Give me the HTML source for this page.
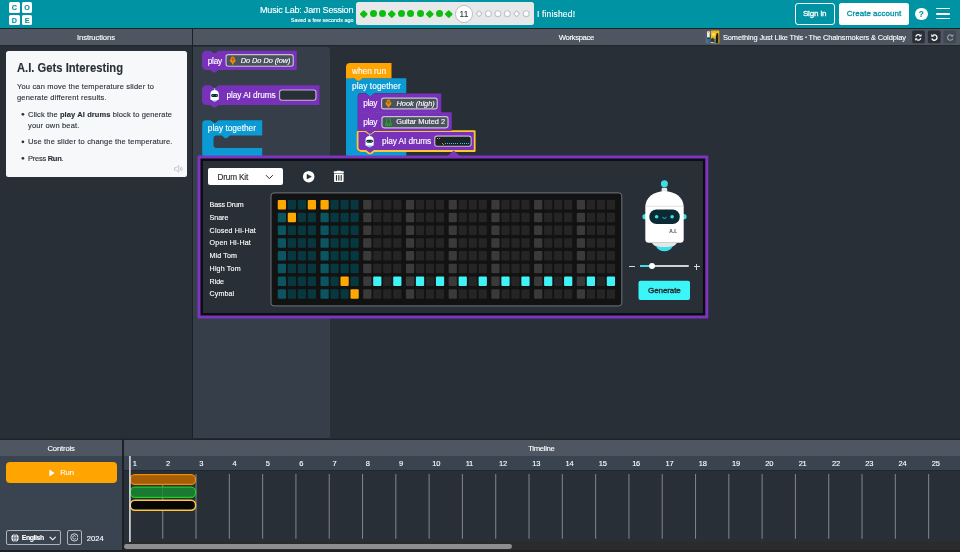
<!DOCTYPE html>
<html lang="en"><head><meta charset="utf-8"><title>Music Lab: Jam Session</title>
<style>
*{box-sizing:border-box;margin:0;padding:0}
html,body{width:960px;height:552px;overflow:hidden;background:#292f36;font-family:"Liberation Sans",sans-serif}
body{position:relative;will-change:transform}
.a{position:absolute}
.t{position:absolute;white-space:nowrap;line-height:1;transform-origin:0 50%;-webkit-text-stroke:0.12px currentColor}
b{font-weight:700}
</style></head>
<body>
<header class="a" style="left:0;top:0;width:960px;height:28px;background:#0093a4">
<div class="a" style="left:9.00px;top:2.00px;width:10.90px;height:10.70px;background:#fff;border-radius:1.5px"></div>
<span class="t" id="t0" style="left:11.85px;top:3.96px;font-size:7.20px;color:#0093a4;font-weight:700;">C</span>
<div class="a" style="left:21.60px;top:2.00px;width:10.90px;height:10.70px;background:#fff;border-radius:1.5px"></div>
<span class="t" id="t1" style="left:24.25px;top:3.96px;font-size:7.20px;color:#0093a4;font-weight:700;">O</span>
<div class="a" style="left:9.00px;top:14.70px;width:10.90px;height:10.70px;background:#fff;border-radius:1.5px"></div>
<span class="t" id="t2" style="left:11.85px;top:16.65px;font-size:7.20px;color:#0093a4;font-weight:700;">D</span>
<div class="a" style="left:21.60px;top:14.70px;width:10.90px;height:10.70px;background:#fff;border-radius:1.5px"></div>
<span class="t" id="t3" style="left:24.65px;top:16.65px;font-size:7.20px;color:#0093a4;font-weight:700;">E</span>
<span class="t" id="t4" style="left:260.00px;top:6.26px;font-size:9.10px;color:#fff;letter-spacing:-0.241px;">Music Lab: Jam Session</span>
<span class="t" id="t5" style="left:290.75px;top:17.50px;font-size:5.40px;color:#fff;letter-spacing:0.046px;">Saved a few seconds ago</span>
<div class="a" style="left:356px;top:2.3px;width:177.5px;height:22.6px;background:#e7e8ea;border-radius:2.5px"></div>
<div class="a" style="left:361.00px;top:11.05px;width:5.50px;height:5.50px;background:#0ebe0e;transform:rotate(45deg);border-radius:1.1px"></div>
<div class="a" style="left:369.60px;top:10.15px;width:7.20px;height:7.20px;background:#0ebe0e;border-radius:50%"></div>
<div class="a" style="left:379.00px;top:10.15px;width:7.20px;height:7.20px;background:#0ebe0e;border-radius:50%"></div>
<div class="a" style="left:389.25px;top:11.05px;width:5.50px;height:5.50px;background:#0ebe0e;transform:rotate(45deg);border-radius:1.1px"></div>
<div class="a" style="left:397.80px;top:10.15px;width:7.20px;height:7.20px;background:#0ebe0e;border-radius:50%"></div>
<div class="a" style="left:407.20px;top:10.15px;width:7.20px;height:7.20px;background:#0ebe0e;border-radius:50%"></div>
<div class="a" style="left:416.60px;top:10.15px;width:7.20px;height:7.20px;background:#0ebe0e;border-radius:50%"></div>
<div class="a" style="left:426.95px;top:11.05px;width:5.50px;height:5.50px;background:#0ebe0e;transform:rotate(45deg);border-radius:1.1px"></div>
<div class="a" style="left:435.50px;top:10.15px;width:7.20px;height:7.20px;background:#0ebe0e;border-radius:50%"></div>
<div class="a" style="left:445.75px;top:11.05px;width:5.50px;height:5.50px;background:#0ebe0e;transform:rotate(45deg);border-radius:1.1px"></div>
<div class="a" style="left:454.95px;top:4.95px;width:17.60px;height:17.60px;background:#fff;border-radius:50%;border:0.9px solid #b9bdc2"></div>
<span class="t" id="t6" style="left:459.44px;top:9.60px;font-size:8.30px;color:#33383e;letter-spacing:0.25px;">11</span>
<svg class="a" style="left:470px;top:4px" width="64" height="20" viewBox="470 4 64 20" fill="#fefefe" stroke="#c2c6cb" stroke-width="1.15"><rect x="476.85" y="11.55" width="4.3" height="4.3" rx="0.6" transform="rotate(45 479.00 13.7)"/><circle cx="488.40" cy="13.7" r="2.95"/><circle cx="497.90" cy="13.7" r="2.95"/><circle cx="507.30" cy="13.7" r="2.95"/><rect x="514.45" y="11.55" width="4.3" height="4.3" rx="0.6" transform="rotate(45 516.60 13.7)"/><circle cx="526.20" cy="13.7" r="2.95"/></svg>
<span class="t" id="t7" style="left:537.00px;top:9.76px;font-size:8.50px;color:#fff;letter-spacing:0.161px;">I finished!</span>
<div class="a" style="left:795.40px;top:3.00px;width:39.40px;height:21.50px;background:transparent;border:1.2px solid #fff;border-radius:3px"></div>
<span class="t" id="t8" style="left:802.90px;top:10.11px;font-size:8.00px;color:#fff;letter-spacing:-0.145px;-webkit-text-stroke:0.3px currentColor;">Sign in</span>
<div class="a" style="left:839.00px;top:3.00px;width:70.40px;height:21.50px;background:#fff;border-radius:2.5px"></div>
<span class="t" id="t9" style="left:846.80px;top:10.11px;font-size:8.00px;color:#0093a4;letter-spacing:0.010px;-webkit-text-stroke:0.3px currentColor;">Create account</span>
<div class="a" style="left:915.20px;top:7.70px;width:12.40px;height:12.40px;background:#fff;border-radius:50%"></div>
<span class="t" id="t10" style="left:918.86px;top:9.85px;font-size:8.30px;color:#0093a4;font-weight:700;">?</span>
<div class="a" style="left:935.70px;top:7.70px;width:13.90px;height:1.80px;background:#fff;border-radius:1px"></div>
<div class="a" style="left:935.70px;top:12.80px;width:13.90px;height:1.80px;background:#fff;border-radius:1px"></div>
<div class="a" style="left:935.70px;top:17.70px;width:13.90px;height:1.80px;background:#fff;border-radius:1px"></div>
</header>
<div class="a" style="left:0.00px;top:28.00px;width:960.00px;height:1.20px;background:#1e242a;"></div>
<div class="a" style="left:0.00px;top:29.20px;width:192.00px;height:16.00px;background:#4d5661;"></div>
<div class="a" style="left:193.20px;top:29.20px;width:766.80px;height:16.00px;background:#4d5661;"></div>
<div class="a" style="left:192.00px;top:28.00px;width:1.20px;height:412.00px;background:#1c2127;"></div>
<div class="a" style="left:0.00px;top:45.20px;width:960.00px;height:1.00px;background:#20262c;"></div>
<span class="t" id="t11" style="left:77.00px;top:33.81px;font-size:7.70px;color:#fff;letter-spacing:-0.119px;">Instructions</span>
<span class="t" id="t12" style="left:558.70px;top:33.81px;font-size:7.70px;color:#fff;letter-spacing:-0.339px;">Workspace</span>
<svg class="a" style="left:0;top:0" width="960" height="552" viewBox="0 0 960 552"><rect x="705.4" y="30.5" width="5.6" height="13" rx="0.6" fill="#59626d"/><rect x="706.2" y="31.4" width="1.2" height="5.2" fill="#3a414a"/><rect x="706.9" y="31.2" width="3" height="6.4" rx="0.9" fill="#e9ebed"/><circle cx="708.4" cy="32.4" r="0.55" fill="#d9a520"/><rect x="707.2" y="37.6" width="2.4" height="1.6" fill="#2f353c"/><rect x="706.5" y="39" width="1.2" height="4.3" fill="#3d7fae"/><rect x="708.1" y="39" width="1.2" height="4.3" fill="#356f99"/><rect x="709.8" y="34" width="1.2" height="8" fill="#34546f"/><rect x="710.9" y="30.5" width="8.4" height="13" rx="0.8" fill="#f0bf19"/><ellipse cx="713.6" cy="34.4" rx="1.5" ry="1.3" fill="#ffe36a"/><rect x="711.6" y="30.9" width="1.4" height="0.9" fill="#e79a1c"/><rect x="715.8" y="30.9" width="1.4" height="0.9" fill="#e79a1c"/><path d="M711 38.8 L713.4 37.6 L714.2 39.6 L714 43.5 H711 Z" fill="#3b3a2c"/><circle cx="713.3" cy="37.6" r="0.8" fill="#f7a81c"/><rect x="714" y="38.6" width="1.7" height="4.6" fill="#3b79a6"/><path d="M716.6 33.4 a0.9 0.9 0 0 1 1.6 0 L718.4 36 L718.3 43.2 H715.8 L715.9 36.5 Z" fill="#1d1b15"/><rect x="710.9" y="42.1" width="2.8" height="1" fill="#d6d9dc"/></svg>
<span class="t" id="t13" style="left:723.00px;top:33.51px;font-size:7.40px;color:#fff;letter-spacing:-0.095px;">Something Just Like This <span style="font-size:5px;position:relative;top:-0.8px">•</span> The Chainsmokers &amp; Coldplay</span>
<svg class="a" style="left:0;top:0" width="960" height="552" viewBox="0 0 960 552"><rect x="912.2" y="30.6" width="12.6" height="12.6" rx="1.6" fill="#292f36"/><rect x="927.9" y="30.6" width="12.7" height="12.6" rx="1.6" fill="#292f36"/><rect x="943.5" y="30.6" width="12.6" height="12.6" rx="1.6" fill="#3f4954"/></svg>
<svg class="a" style="left:912.2px;top:30.6px" width="12.6" height="12.6" viewBox="0 0 12.6 12.6" fill="none" stroke="#fff" stroke-width="1.55"><g transform="translate(6.3 6.4) scale(0.84) translate(-6.3 -6.3)"><path d="M3.3 5.5 A3.1 3.1 0 0 1 8.6 4.0"/><path d="M9.3 7.1 A3.1 3.1 0 0 1 4.0 8.6"/><path d="M10.1 2.3 V5.3 H7.1 Z" fill="#fff" stroke="none"/><path d="M2.5 10.3 V7.3 H5.5 Z" fill="#fff" stroke="none"/></g></svg>
<svg class="a" style="left:927.9px;top:30.6px" width="12.7" height="12.6" viewBox="0 0 12.6 12.6" fill="none" stroke="#fff" stroke-width="1.55"><g transform="translate(6.3 6.4) scale(0.84) translate(-6.3 -6.3)"><path d="M4.3 4.0 A3.2 3.2 0 1 1 3.3 7.6"/><path d="M2.6 2.2 V5.6 H6 Z" fill="#fff" stroke="none"/></g></svg>
<svg class="a" style="left:943.5px;top:30.6px" width="12.6" height="12.6" viewBox="0 0 12.6 12.6" fill="none" stroke="#959ca4" stroke-width="1.4"><g transform="translate(6.3 6.4) scale(0.84) translate(-6.3 -6.3)"><path d="M8.3 4.0 A3.2 3.2 0 1 0 9.3 7.6"/><path d="M10 2.2 V5.6 H6.6 Z" fill="#959ca4" stroke="none"/></g></svg>
<div class="a" style="left:6.00px;top:51.00px;width:180.60px;height:126.00px;background:#f7f8fa;border-radius:2.5px"></div>
<span class="t" id="t14" style="left:17.00px;top:61.45px;font-size:13.30px;color:#292f36;font-weight:700;transform:scaleX(0.8439);">A.I. Gets Interesting</span>
<span class="t" id="t15" style="left:17.00px;top:83.01px;font-size:7.50px;color:#2b3138;letter-spacing:0.172px;">You can move the temperature slider to</span>
<span class="t" id="t16" style="left:17.00px;top:94.01px;font-size:7.50px;color:#2b3138;letter-spacing:0.176px;">generate different results.</span>
<span class="t" id="t17" style="left:28.00px;top:110.51px;font-size:7.50px;color:#2b3138;letter-spacing:0.105px;">Click the <b style="color:#292f36">play AI drums</b> block to generate</span>
<span class="t" id="t18" style="left:28.00px;top:121.61px;font-size:7.50px;color:#2b3138;letter-spacing:0.161px;">your own beat.</span>
<span class="t" id="t19" style="left:28.00px;top:138.01px;font-size:7.50px;color:#2b3138;letter-spacing:0.160px;">Use the slider to change the temperature.</span>
<span class="t" id="t20" style="left:28.00px;top:154.51px;font-size:7.50px;color:#2b3138;letter-spacing:-0.261px;">Press <b style="color:#292f36">Run</b>.</span>
<svg class="a" style="left:20px;top:110px" width="6" height="52" viewBox="20 110 6 52" fill="#2b3138"><circle cx="22.9" cy="114.3" r="1.35"/><circle cx="22.9" cy="141.8" r="1.35"/><circle cx="22.9" cy="158.3" r="1.35"/></svg>
<svg class="a" style="left:173.6px;top:165.4px" width="9.6" height="7.8" viewBox="0 0 9.6 7.8" fill="none" stroke="#b3b7bc" stroke-width="0.7" stroke-linejoin="round"><path d="M0.5 2.7 H2.2 L4.8 0.6 V7.2 L2.2 5.1 H0.5 Z"/><path d="M6.2 2.6 Q7 3.9 6.2 5.2"/><path d="M7.5 1.6 Q9 3.9 7.5 6.2"/></svg>
<div class="a" style="left:193.20px;top:46.60px;width:136.80px;height:392.40px;background:#353e49;border-radius:0 3px 3px 0"></div>
<svg class="a" style="left:0;top:0" width="960" height="552" viewBox="0 0 960 552"><path d="M206.20 50.70 H210.30 l2.9 2.3 q1.2 0.6 2.4 0 l2.9 -2.3 H296.75 V70.00 H218.50 l-2.9 2.3 q-1.2 0.6 -2.4 0 l-2.9 -2.3 H206.20 a4.20 4.20 0 0 1 -4.20 -4.20 V54.90 a4.20 4.20 0 0 1 4.20 -4.20 Z" fill="#7832ba"/><path d="M206.20 85.30 H210.30 l2.9 2.3 q1.2 0.6 2.4 0 l2.9 -2.3 H319.50 V104.90 H218.50 l-2.9 2.3 q-1.2 0.6 -2.4 0 l-2.9 -2.3 H206.20 a4.20 4.20 0 0 1 -4.20 -4.20 V89.50 a4.20 4.20 0 0 1 4.20 -4.20 Z" fill="#7832ba"/><path d="M205.70 120.30 H210.50 l2.9 2.3 q1.2 0.6 2.4 0 l2.9 -2.3 H262.20 V135.60 H230.00 l-2.9 2.3 q-1.2 0.6 -2.4 0 l-2.9 -2.3 H216.50 a3 3 0 0 0 -3 3 V145.10 a3 3 0 0 0 3 3 H262.20 V157.10 H218.70 l-2.9 2.3 q-1.2 0.6 -2.4 0 l-2.9 -2.3 H205.70 a3.50 3.50 0 0 1 -3.50 -3.50 V123.80 a3.50 3.50 0 0 1 3.50 -3.50 Z" fill="#0b9ad3"/><path d="M346.01 78.25 H406.30 V93.35 H374.25 l-2.9 2.3 q-1.2 0.6 -2.4 0 l-2.9 -2.3 H360.75 a3 3 0 0 0 -3 3 V148.75 a3 3 0 0 0 3 3 H406.30 V157.75 H362.50 l-2.9 2.3 q-1.2 0.6 -2.4 0 l-2.9 -2.3 H349.50 a3.50 3.50 0 0 1 -3.50 -3.50 V78.26 a0.01 0.01 0 0 1 0.01 -0.01 Z" fill="#0b9ad3"/><path d="M349.5 63 H391.5 V78.25 H362.5 l-2.9 2.3 q-1.2 0.6 -2.4 0 l-2.9 -2.3 H349.5 a0 0 0 0 1 -3.5 0 V67 a4 4 0 0 1 4 -4 Z" fill="#ffa400"/><rect x="346" y="70" width="6" height="8.25" fill="#ffa400"/><path d="M357.76 131.00 H366.05 l2.9 2.3 q1.2 0.6 2.4 0 l2.9 -2.3 H474.75 V151.00 H374.25 l-2.9 2.3 q-1.2 0.6 -2.4 0 l-2.9 -2.3 H361.25 a3.50 3.50 0 0 1 -3.50 -3.50 V131.01 a0.01 0.01 0 0 1 0.01 -0.01 Z" fill="#7832ba"/><path d="M359.10 131.20 H365.90 l2.9 2.3 q1.2 0.6 2.4 0 l2.9 -2.3 H474.70 V151.00 H374.10 l-2.9 2.3 q-1.2 0.6 -2.4 0 l-2.9 -2.3 H361.10 a3.50 3.50 0 0 1 -3.50 -3.50 V132.70 a1.50 1.50 0 0 1 1.50 -1.50 Z" fill="none" stroke="#ffc62e" stroke-width="1.8" stroke-linejoin="round"/><path d="M357.76 112.30 H366.05 l2.9 2.3 q1.2 0.6 2.4 0 l2.9 -2.3 H451.75 V131.10 H374.25 l-2.9 2.3 q-1.2 0.6 -2.4 0 l-2.9 -2.3 H357.76 a0.01 0.01 0 0 1 -0.01 -0.01 V112.31 a0.01 0.01 0 0 1 0.01 -0.01 Z" fill="#7832ba"/><path d="M361.25 93.50 H366.05 l2.9 2.3 q1.2 0.6 2.4 0 l2.9 -2.3 H441.25 V112.40 H374.25 l-2.9 2.3 q-1.2 0.6 -2.4 0 l-2.9 -2.3 H357.76 a0.01 0.01 0 0 1 -0.01 -0.01 V97.00 a3.50 3.50 0 0 1 3.50 -3.50 Z" fill="#7832ba"/><path d="M361 112.4 H366.05 l2.9 2.3 q1.2 0.6 2.4 0 l2.9 -2.3 H441.2" fill="none" stroke="#9a62d3" stroke-width="0.5" stroke-dasharray="1 0.8" transform="translate(0,0)"/></svg>
<span class="t" id="t21" style="left:207.75px;top:56.75px;font-size:8.30px;color:#fff;letter-spacing:-0.245px;">play</span>
<svg class="a" style="left:0;top:0" width="960" height="552" viewBox="0 0 960 552"><rect x="226.07" y="54.57" width="67.15" height="11.65" rx="2.2" fill="#4a535d" stroke="rgba(255,255,255,0.66)" stroke-width="1.15"/></svg>
<svg class="a" style="left:0;top:0" width="960" height="552" viewBox="0 0 960 552"><g transform="translate(229.65 56.20)"><path d="M3.1 0.2 C4.3 0.2 5 1 5 2.1 V3.2 L6.1 3.6 C6.1 5.2 5.2 6.3 3.9 6.7 L3.7 8.4 H2.5 L2.3 6.7 C1 6.3 0.1 5.2 0.1 3.6 L1.2 3.2 V2.1 C1.2 1 1.9 0.2 3.1 0.2 Z" fill="#ee8d0a"/><rect x="2.2" y="1.2" width="1.8" height="3.9" rx="0.9" fill="#b86600"/></g></svg>
<span class="t" id="t22" style="left:240.75px;top:57.22px;font-size:7.40px;color:#fff;font-style:italic;letter-spacing:-0.059px;">Do Do Do (low)</span>
<svg class="a" style="left:209.70px;top:88.00px" width="9.20" height="14.00" viewBox="0 0 46 70"><circle cx="23" cy="4" r="3.6" fill="#3de3ea"/><rect x="20.5" y="6" width="5" height="6" fill="#d9dde0"/><path d="M2 30 C2 16 11 10 23 10 C35 10 44 16 44 30 V56 a4 4 0 0 1 -4 4 H6 a4 4 0 0 1 -4 -4 Z" fill="#fff"/><rect x="6" y="30" width="34" height="15" rx="7.5" fill="#0b2a33"/><circle cx="14.5" cy="37.5" r="2.6" fill="#3de3ea"/><circle cx="31.5" cy="37.5" r="2.6" fill="#3de3ea"/><path d="M9 60 H37 C35 64 30 66 23 66 C16 66 11 64 9 60Z" fill="#e3e6e8"/><path d="M14 64 H32 C30 68 27 69.5 23 69.5 C19 69.5 16 68 14 64Z" fill="#3de3ea"/></svg>
<span class="t" id="t23" style="left:226.50px;top:91.00px;font-size:8.30px;color:#fff;letter-spacing:-0.085px;">play AI drums</span>
<svg class="a" style="left:0;top:0" width="960" height="552" viewBox="0 0 960 552"><rect x="279.57" y="89.97" width="36.35" height="10.25" rx="2.2" fill="#292f36" stroke="rgba(255,255,255,0.66)" stroke-width="1.15"/></svg>
<span class="t" id="t24" style="left:207.80px;top:123.60px;font-size:8.30px;color:#fff;letter-spacing:0.018px;">play together</span>
<span class="t" id="t25" style="left:352.00px;top:66.75px;font-size:8.30px;color:#fff;letter-spacing:-0.020px;">when run</span>
<span class="t" id="t26" style="left:352.00px;top:82.00px;font-size:8.30px;color:#fff;letter-spacing:0.064px;">play together</span>
<span class="t" id="t27" style="left:363.25px;top:99.00px;font-size:8.30px;color:#fff;letter-spacing:-0.328px;">play</span>
<svg class="a" style="left:0;top:0" width="960" height="552" viewBox="0 0 960 552"><rect x="381.57" y="98.07" width="55.65" height="10.85" rx="2.2" fill="#4a535d" stroke="rgba(255,255,255,0.66)" stroke-width="1.15"/></svg>
<svg class="a" style="left:0;top:0" width="960" height="552" viewBox="0 0 960 552"><g transform="translate(385.40 99.20)"><path d="M3.1 0.2 C4.3 0.2 5 1 5 2.1 V3.2 L6.1 3.6 C6.1 5.2 5.2 6.3 3.9 6.7 L3.7 8.4 H2.5 L2.3 6.7 C1 6.3 0.1 5.2 0.1 3.6 L1.2 3.2 V2.1 C1.2 1 1.9 0.2 3.1 0.2 Z" fill="#ee8d0a"/><rect x="2.2" y="1.2" width="1.8" height="3.9" rx="0.9" fill="#b86600"/></g></svg>
<span class="t" id="t28" style="left:396.50px;top:99.60px;font-size:7.40px;color:#fff;font-style:italic;letter-spacing:0.005px;">Hook (high)</span>
<span class="t" id="t29" style="left:363.25px;top:117.60px;font-size:8.30px;color:#fff;letter-spacing:-0.328px;">play</span>
<svg class="a" style="left:0;top:0" width="960" height="552" viewBox="0 0 960 552"><rect x="381.97" y="116.57" width="66.05" height="11.25" rx="2.2" fill="#4a535d" stroke="rgba(255,255,255,0.66)" stroke-width="1.15"/></svg>
<svg class="a" style="left:385.25px;top:117.80px" width="7" height="8.6" viewBox="0 0 8 10" fill="none" stroke="#1db528" stroke-width="1.1" stroke-linecap="round"><path d="M2.3 0.8 L1.6 6.2"/><path d="M5.7 0.8 L6.4 6.2"/><ellipse cx="2" cy="7.6" rx="1.5" ry="1.7" fill="#138a1f"/><ellipse cx="6" cy="7.6" rx="1.5" ry="1.7" fill="#138a1f"/></svg>
<span class="t" id="t30" style="left:396.25px;top:118.41px;font-size:7.40px;color:#fff;letter-spacing:-0.011px;">Guitar Muted 2</span>
<svg class="a" style="left:365.00px;top:134.20px" width="9.20" height="13.60" viewBox="0 0 46 70"><circle cx="23" cy="4" r="3.6" fill="#3de3ea"/><rect x="20.5" y="6" width="5" height="6" fill="#d9dde0"/><path d="M2 30 C2 16 11 10 23 10 C35 10 44 16 44 30 V56 a4 4 0 0 1 -4 4 H6 a4 4 0 0 1 -4 -4 Z" fill="#fff"/><rect x="6" y="30" width="34" height="15" rx="7.5" fill="#0b2a33"/><circle cx="14.5" cy="37.5" r="2.6" fill="#3de3ea"/><circle cx="31.5" cy="37.5" r="2.6" fill="#3de3ea"/><path d="M9 60 H37 C35 64 30 66 23 66 C16 66 11 64 9 60Z" fill="#e3e6e8"/><path d="M14 64 H32 C30 68 27 69.5 23 69.5 C19 69.5 16 68 14 64Z" fill="#3de3ea"/></svg>
<span class="t" id="t31" style="left:381.90px;top:136.75px;font-size:8.30px;color:#fff;letter-spacing:-0.076px;">play AI drums</span>
<svg class="a" style="left:0;top:0" width="960" height="552" viewBox="0 0 960 552"><rect x="434.77" y="136.07" width="36.35" height="10.15" rx="2.2" fill="#1d2329" stroke="rgba(255,255,255,0.66)" stroke-width="1.15"/></svg>
<div class="a" style="left:437.30px;top:137.60px;width:1.00px;height:0.80px;background:#f08c00;"></div><div class="a" style="left:439.00px;top:138.20px;width:1.00px;height:0.80px;background:#f08c00;"></div><div class="a" style="left:441.60px;top:143.20px;width:1.00px;height:0.80px;background:#f08c00;"></div><div class="a" style="left:442.90px;top:144.00px;width:1.00px;height:0.80px;background:#f08c00;"></div><div class="a" style="left:444.80px;top:143.40px;width:1.10px;height:0.80px;background:#2fd6dc;"></div><div class="a" style="left:446.90px;top:143.40px;width:1.10px;height:0.80px;background:#2fd6dc;"></div><div class="a" style="left:449.00px;top:143.40px;width:1.10px;height:0.80px;background:#2fd6dc;"></div><div class="a" style="left:451.10px;top:143.40px;width:1.10px;height:0.80px;background:#2fd6dc;"></div><div class="a" style="left:453.20px;top:143.40px;width:1.10px;height:0.80px;background:#2fd6dc;"></div><div class="a" style="left:455.30px;top:143.40px;width:1.10px;height:0.80px;background:#2fd6dc;"></div><div class="a" style="left:457.40px;top:143.40px;width:1.10px;height:0.80px;background:#2fd6dc;"></div><div class="a" style="left:459.50px;top:143.40px;width:1.10px;height:0.80px;background:#2fd6dc;"></div><div class="a" style="left:461.60px;top:143.40px;width:1.10px;height:0.80px;background:#2fd6dc;"></div><div class="a" style="left:463.70px;top:143.40px;width:1.10px;height:0.80px;background:#2fd6dc;"></div><div class="a" style="left:465.80px;top:143.40px;width:1.10px;height:0.80px;background:#2fd6dc;"></div><div class="a" style="left:467.90px;top:143.40px;width:1.10px;height:0.80px;background:#2fd6dc;"></div>
<svg class="a" style="left:446px;top:149.8px" width="16" height="7" viewBox="0 0 16 7"><path d="M1.3 6.2 L7.75 0.5 L14.2 6.2 Z" fill="#7c35c1"/></svg>
<svg class="a" style="left:0;top:0" width="960" height="552" viewBox="0 0 960 552"><rect x="197.5" y="155.5" width="510.8" height="163" rx="1" fill="#7c35c1"/><rect x="200.5" y="158.5" width="504.8" height="157" fill="#0b0c0d"/><rect x="202.9" y="160.9" width="500" height="152.2" fill="#292f36"/></svg>
<div class="a" style="left:208.30px;top:168.30px;width:74.50px;height:16.80px;background:#fff;border-radius:2px"></div>
<span class="t" id="t32" style="left:217.50px;top:174.00px;font-size:8.20px;color:#1f2429;letter-spacing:-0.149px;">Drum Kit</span>
<svg class="a" style="left:265px;top:174.3px" width="9" height="6" viewBox="0 0 9 6" fill="none" stroke="#2c3238" stroke-width="1"><path d="M1 1.2 L4.4 4.6 L7.8 1.2"/></svg>
<svg class="a" style="left:0;top:0" width="960" height="552" viewBox="0 0 960 552" fill="#fff"><g transform="translate(333.6 170.1)"><rect x="2.9" y="0.55" width="4.6" height="1.4" rx="0.7"/><rect x="0.15" y="1.25" width="10.1" height="1.65" rx="0.6"/><path d="M0.5 3.5 H10 V10.8 a1.2 1.2 0 0 1 -1.2 1.2 H1.7 a1.2 1.2 0 0 1 -1.2 -1.2 Z"/><g fill="#292f36"><rect x="2.3" y="4.8" width="1.15" height="5.9" rx="0.4"/><rect x="4.67" y="4.8" width="1.15" height="5.9" rx="0.4"/><rect x="7.03" y="4.8" width="1.15" height="5.9" rx="0.4"/></g></g><g transform="translate(302.7 170.65)"><circle cx="6" cy="6" r="5.75" fill="#fff"/><path d="M4.3 3.6 L8.7 6 L4.3 8.4 Z" fill="#292f36" stroke="#292f36" stroke-width="0.5" stroke-linejoin="round"/></g></svg>
<span class="t" id="t33" style="left:209.60px;top:202.11px;font-size:7.10px;color:#fff;letter-spacing:-0.112px;">Bass Drum</span>
<span class="t" id="t34" style="left:209.60px;top:214.86px;font-size:7.10px;color:#fff;letter-spacing:-0.034px;">Snare</span>
<span class="t" id="t35" style="left:209.60px;top:227.61px;font-size:7.10px;color:#fff;letter-spacing:0.170px;">Closed Hi-Hat</span>
<span class="t" id="t36" style="left:209.60px;top:240.36px;font-size:7.10px;color:#fff;letter-spacing:0.176px;">Open Hi-Hat</span>
<span class="t" id="t37" style="left:209.60px;top:253.11px;font-size:7.10px;color:#fff;letter-spacing:0.119px;">Mid Tom</span>
<span class="t" id="t38" style="left:209.60px;top:265.86px;font-size:7.10px;color:#fff;letter-spacing:0.165px;">High Tom</span>
<span class="t" id="t39" style="left:209.60px;top:278.61px;font-size:7.10px;color:#fff;letter-spacing:-0.065px;">Ride</span>
<span class="t" id="t40" style="left:209.60px;top:291.36px;font-size:7.10px;color:#fff;letter-spacing:0.071px;">Cymbal</span>
<svg class="a" style="left:0;top:0" width="960" height="552" viewBox="0 0 960 552"><rect x="271" y="192.9" width="350.8" height="113" rx="3" fill="#121212" stroke="#6f757c" stroke-width="1"/></svg>
<svg class="a grid" style="left:0;top:0" width="960" height="552" viewBox="0 0 960 552"><rect x="277.75" y="200.00" width="8.25" height="9.5" rx="1" fill="#ffa800"/><rect x="287.75" y="200.00" width="8.25" height="9.5" rx="1" fill="#07383f"/><rect x="297.75" y="200.00" width="8.25" height="9.5" rx="1" fill="#07383f"/><rect x="307.75" y="200.00" width="8.25" height="9.5" rx="1" fill="#ffa800"/><rect x="320.47" y="200.00" width="8.25" height="9.5" rx="1" fill="#ffa800"/><rect x="330.47" y="200.00" width="8.25" height="9.5" rx="1" fill="#07383f"/><rect x="340.47" y="200.00" width="8.25" height="9.5" rx="1" fill="#07383f"/><rect x="350.47" y="200.00" width="8.25" height="9.5" rx="1" fill="#07383f"/><rect x="363.19" y="200.00" width="8.25" height="9.5" rx="1" fill="#3a3a3a"/><rect x="373.19" y="200.00" width="8.25" height="9.5" rx="1" fill="#252525"/><rect x="383.19" y="200.00" width="8.25" height="9.5" rx="1" fill="#252525"/><rect x="393.19" y="200.00" width="8.25" height="9.5" rx="1" fill="#252525"/><rect x="405.91" y="200.00" width="8.25" height="9.5" rx="1" fill="#3a3a3a"/><rect x="415.91" y="200.00" width="8.25" height="9.5" rx="1" fill="#252525"/><rect x="425.91" y="200.00" width="8.25" height="9.5" rx="1" fill="#252525"/><rect x="435.91" y="200.00" width="8.25" height="9.5" rx="1" fill="#252525"/><rect x="448.63" y="200.00" width="8.25" height="9.5" rx="1" fill="#3a3a3a"/><rect x="458.63" y="200.00" width="8.25" height="9.5" rx="1" fill="#252525"/><rect x="468.63" y="200.00" width="8.25" height="9.5" rx="1" fill="#252525"/><rect x="478.63" y="200.00" width="8.25" height="9.5" rx="1" fill="#252525"/><rect x="491.35" y="200.00" width="8.25" height="9.5" rx="1" fill="#3a3a3a"/><rect x="501.35" y="200.00" width="8.25" height="9.5" rx="1" fill="#252525"/><rect x="511.35" y="200.00" width="8.25" height="9.5" rx="1" fill="#252525"/><rect x="521.35" y="200.00" width="8.25" height="9.5" rx="1" fill="#252525"/><rect x="534.07" y="200.00" width="8.25" height="9.5" rx="1" fill="#3a3a3a"/><rect x="544.07" y="200.00" width="8.25" height="9.5" rx="1" fill="#252525"/><rect x="554.07" y="200.00" width="8.25" height="9.5" rx="1" fill="#252525"/><rect x="564.07" y="200.00" width="8.25" height="9.5" rx="1" fill="#252525"/><rect x="576.79" y="200.00" width="8.25" height="9.5" rx="1" fill="#3a3a3a"/><rect x="586.79" y="200.00" width="8.25" height="9.5" rx="1" fill="#252525"/><rect x="596.79" y="200.00" width="8.25" height="9.5" rx="1" fill="#252525"/><rect x="606.79" y="200.00" width="8.25" height="9.5" rx="1" fill="#252525"/><rect x="277.75" y="212.75" width="8.25" height="9.5" rx="1" fill="#0b5561"/><rect x="287.75" y="212.75" width="8.25" height="9.5" rx="1" fill="#ffa800"/><rect x="297.75" y="212.75" width="8.25" height="9.5" rx="1" fill="#07383f"/><rect x="307.75" y="212.75" width="8.25" height="9.5" rx="1" fill="#07383f"/><rect x="320.47" y="212.75" width="8.25" height="9.5" rx="1" fill="#0b5561"/><rect x="330.47" y="212.75" width="8.25" height="9.5" rx="1" fill="#07383f"/><rect x="340.47" y="212.75" width="8.25" height="9.5" rx="1" fill="#07383f"/><rect x="350.47" y="212.75" width="8.25" height="9.5" rx="1" fill="#07383f"/><rect x="363.19" y="212.75" width="8.25" height="9.5" rx="1" fill="#3a3a3a"/><rect x="373.19" y="212.75" width="8.25" height="9.5" rx="1" fill="#252525"/><rect x="383.19" y="212.75" width="8.25" height="9.5" rx="1" fill="#252525"/><rect x="393.19" y="212.75" width="8.25" height="9.5" rx="1" fill="#252525"/><rect x="405.91" y="212.75" width="8.25" height="9.5" rx="1" fill="#3a3a3a"/><rect x="415.91" y="212.75" width="8.25" height="9.5" rx="1" fill="#252525"/><rect x="425.91" y="212.75" width="8.25" height="9.5" rx="1" fill="#252525"/><rect x="435.91" y="212.75" width="8.25" height="9.5" rx="1" fill="#252525"/><rect x="448.63" y="212.75" width="8.25" height="9.5" rx="1" fill="#3a3a3a"/><rect x="458.63" y="212.75" width="8.25" height="9.5" rx="1" fill="#252525"/><rect x="468.63" y="212.75" width="8.25" height="9.5" rx="1" fill="#252525"/><rect x="478.63" y="212.75" width="8.25" height="9.5" rx="1" fill="#252525"/><rect x="491.35" y="212.75" width="8.25" height="9.5" rx="1" fill="#3a3a3a"/><rect x="501.35" y="212.75" width="8.25" height="9.5" rx="1" fill="#252525"/><rect x="511.35" y="212.75" width="8.25" height="9.5" rx="1" fill="#252525"/><rect x="521.35" y="212.75" width="8.25" height="9.5" rx="1" fill="#252525"/><rect x="534.07" y="212.75" width="8.25" height="9.5" rx="1" fill="#3a3a3a"/><rect x="544.07" y="212.75" width="8.25" height="9.5" rx="1" fill="#252525"/><rect x="554.07" y="212.75" width="8.25" height="9.5" rx="1" fill="#252525"/><rect x="564.07" y="212.75" width="8.25" height="9.5" rx="1" fill="#252525"/><rect x="576.79" y="212.75" width="8.25" height="9.5" rx="1" fill="#3a3a3a"/><rect x="586.79" y="212.75" width="8.25" height="9.5" rx="1" fill="#252525"/><rect x="596.79" y="212.75" width="8.25" height="9.5" rx="1" fill="#252525"/><rect x="606.79" y="212.75" width="8.25" height="9.5" rx="1" fill="#252525"/><rect x="277.75" y="225.50" width="8.25" height="9.5" rx="1" fill="#0b5561"/><rect x="287.75" y="225.50" width="8.25" height="9.5" rx="1" fill="#07383f"/><rect x="297.75" y="225.50" width="8.25" height="9.5" rx="1" fill="#07383f"/><rect x="307.75" y="225.50" width="8.25" height="9.5" rx="1" fill="#07383f"/><rect x="320.47" y="225.50" width="8.25" height="9.5" rx="1" fill="#0b5561"/><rect x="330.47" y="225.50" width="8.25" height="9.5" rx="1" fill="#07383f"/><rect x="340.47" y="225.50" width="8.25" height="9.5" rx="1" fill="#07383f"/><rect x="350.47" y="225.50" width="8.25" height="9.5" rx="1" fill="#07383f"/><rect x="363.19" y="225.50" width="8.25" height="9.5" rx="1" fill="#3a3a3a"/><rect x="373.19" y="225.50" width="8.25" height="9.5" rx="1" fill="#252525"/><rect x="383.19" y="225.50" width="8.25" height="9.5" rx="1" fill="#252525"/><rect x="393.19" y="225.50" width="8.25" height="9.5" rx="1" fill="#252525"/><rect x="405.91" y="225.50" width="8.25" height="9.5" rx="1" fill="#3a3a3a"/><rect x="415.91" y="225.50" width="8.25" height="9.5" rx="1" fill="#252525"/><rect x="425.91" y="225.50" width="8.25" height="9.5" rx="1" fill="#252525"/><rect x="435.91" y="225.50" width="8.25" height="9.5" rx="1" fill="#252525"/><rect x="448.63" y="225.50" width="8.25" height="9.5" rx="1" fill="#3a3a3a"/><rect x="458.63" y="225.50" width="8.25" height="9.5" rx="1" fill="#252525"/><rect x="468.63" y="225.50" width="8.25" height="9.5" rx="1" fill="#252525"/><rect x="478.63" y="225.50" width="8.25" height="9.5" rx="1" fill="#252525"/><rect x="491.35" y="225.50" width="8.25" height="9.5" rx="1" fill="#3a3a3a"/><rect x="501.35" y="225.50" width="8.25" height="9.5" rx="1" fill="#252525"/><rect x="511.35" y="225.50" width="8.25" height="9.5" rx="1" fill="#252525"/><rect x="521.35" y="225.50" width="8.25" height="9.5" rx="1" fill="#252525"/><rect x="534.07" y="225.50" width="8.25" height="9.5" rx="1" fill="#3a3a3a"/><rect x="544.07" y="225.50" width="8.25" height="9.5" rx="1" fill="#252525"/><rect x="554.07" y="225.50" width="8.25" height="9.5" rx="1" fill="#252525"/><rect x="564.07" y="225.50" width="8.25" height="9.5" rx="1" fill="#252525"/><rect x="576.79" y="225.50" width="8.25" height="9.5" rx="1" fill="#3a3a3a"/><rect x="586.79" y="225.50" width="8.25" height="9.5" rx="1" fill="#252525"/><rect x="596.79" y="225.50" width="8.25" height="9.5" rx="1" fill="#252525"/><rect x="606.79" y="225.50" width="8.25" height="9.5" rx="1" fill="#252525"/><rect x="277.75" y="238.25" width="8.25" height="9.5" rx="1" fill="#0b5561"/><rect x="287.75" y="238.25" width="8.25" height="9.5" rx="1" fill="#07383f"/><rect x="297.75" y="238.25" width="8.25" height="9.5" rx="1" fill="#07383f"/><rect x="307.75" y="238.25" width="8.25" height="9.5" rx="1" fill="#07383f"/><rect x="320.47" y="238.25" width="8.25" height="9.5" rx="1" fill="#0b5561"/><rect x="330.47" y="238.25" width="8.25" height="9.5" rx="1" fill="#07383f"/><rect x="340.47" y="238.25" width="8.25" height="9.5" rx="1" fill="#07383f"/><rect x="350.47" y="238.25" width="8.25" height="9.5" rx="1" fill="#07383f"/><rect x="363.19" y="238.25" width="8.25" height="9.5" rx="1" fill="#3a3a3a"/><rect x="373.19" y="238.25" width="8.25" height="9.5" rx="1" fill="#252525"/><rect x="383.19" y="238.25" width="8.25" height="9.5" rx="1" fill="#252525"/><rect x="393.19" y="238.25" width="8.25" height="9.5" rx="1" fill="#252525"/><rect x="405.91" y="238.25" width="8.25" height="9.5" rx="1" fill="#3a3a3a"/><rect x="415.91" y="238.25" width="8.25" height="9.5" rx="1" fill="#252525"/><rect x="425.91" y="238.25" width="8.25" height="9.5" rx="1" fill="#252525"/><rect x="435.91" y="238.25" width="8.25" height="9.5" rx="1" fill="#252525"/><rect x="448.63" y="238.25" width="8.25" height="9.5" rx="1" fill="#3a3a3a"/><rect x="458.63" y="238.25" width="8.25" height="9.5" rx="1" fill="#252525"/><rect x="468.63" y="238.25" width="8.25" height="9.5" rx="1" fill="#252525"/><rect x="478.63" y="238.25" width="8.25" height="9.5" rx="1" fill="#252525"/><rect x="491.35" y="238.25" width="8.25" height="9.5" rx="1" fill="#3a3a3a"/><rect x="501.35" y="238.25" width="8.25" height="9.5" rx="1" fill="#252525"/><rect x="511.35" y="238.25" width="8.25" height="9.5" rx="1" fill="#252525"/><rect x="521.35" y="238.25" width="8.25" height="9.5" rx="1" fill="#252525"/><rect x="534.07" y="238.25" width="8.25" height="9.5" rx="1" fill="#3a3a3a"/><rect x="544.07" y="238.25" width="8.25" height="9.5" rx="1" fill="#252525"/><rect x="554.07" y="238.25" width="8.25" height="9.5" rx="1" fill="#252525"/><rect x="564.07" y="238.25" width="8.25" height="9.5" rx="1" fill="#252525"/><rect x="576.79" y="238.25" width="8.25" height="9.5" rx="1" fill="#3a3a3a"/><rect x="586.79" y="238.25" width="8.25" height="9.5" rx="1" fill="#252525"/><rect x="596.79" y="238.25" width="8.25" height="9.5" rx="1" fill="#252525"/><rect x="606.79" y="238.25" width="8.25" height="9.5" rx="1" fill="#252525"/><rect x="277.75" y="251.00" width="8.25" height="9.5" rx="1" fill="#0b5561"/><rect x="287.75" y="251.00" width="8.25" height="9.5" rx="1" fill="#07383f"/><rect x="297.75" y="251.00" width="8.25" height="9.5" rx="1" fill="#07383f"/><rect x="307.75" y="251.00" width="8.25" height="9.5" rx="1" fill="#07383f"/><rect x="320.47" y="251.00" width="8.25" height="9.5" rx="1" fill="#0b5561"/><rect x="330.47" y="251.00" width="8.25" height="9.5" rx="1" fill="#07383f"/><rect x="340.47" y="251.00" width="8.25" height="9.5" rx="1" fill="#07383f"/><rect x="350.47" y="251.00" width="8.25" height="9.5" rx="1" fill="#07383f"/><rect x="363.19" y="251.00" width="8.25" height="9.5" rx="1" fill="#3a3a3a"/><rect x="373.19" y="251.00" width="8.25" height="9.5" rx="1" fill="#252525"/><rect x="383.19" y="251.00" width="8.25" height="9.5" rx="1" fill="#252525"/><rect x="393.19" y="251.00" width="8.25" height="9.5" rx="1" fill="#252525"/><rect x="405.91" y="251.00" width="8.25" height="9.5" rx="1" fill="#3a3a3a"/><rect x="415.91" y="251.00" width="8.25" height="9.5" rx="1" fill="#252525"/><rect x="425.91" y="251.00" width="8.25" height="9.5" rx="1" fill="#252525"/><rect x="435.91" y="251.00" width="8.25" height="9.5" rx="1" fill="#252525"/><rect x="448.63" y="251.00" width="8.25" height="9.5" rx="1" fill="#3a3a3a"/><rect x="458.63" y="251.00" width="8.25" height="9.5" rx="1" fill="#252525"/><rect x="468.63" y="251.00" width="8.25" height="9.5" rx="1" fill="#252525"/><rect x="478.63" y="251.00" width="8.25" height="9.5" rx="1" fill="#252525"/><rect x="491.35" y="251.00" width="8.25" height="9.5" rx="1" fill="#3a3a3a"/><rect x="501.35" y="251.00" width="8.25" height="9.5" rx="1" fill="#252525"/><rect x="511.35" y="251.00" width="8.25" height="9.5" rx="1" fill="#252525"/><rect x="521.35" y="251.00" width="8.25" height="9.5" rx="1" fill="#252525"/><rect x="534.07" y="251.00" width="8.25" height="9.5" rx="1" fill="#3a3a3a"/><rect x="544.07" y="251.00" width="8.25" height="9.5" rx="1" fill="#252525"/><rect x="554.07" y="251.00" width="8.25" height="9.5" rx="1" fill="#252525"/><rect x="564.07" y="251.00" width="8.25" height="9.5" rx="1" fill="#252525"/><rect x="576.79" y="251.00" width="8.25" height="9.5" rx="1" fill="#3a3a3a"/><rect x="586.79" y="251.00" width="8.25" height="9.5" rx="1" fill="#252525"/><rect x="596.79" y="251.00" width="8.25" height="9.5" rx="1" fill="#252525"/><rect x="606.79" y="251.00" width="8.25" height="9.5" rx="1" fill="#252525"/><rect x="277.75" y="263.75" width="8.25" height="9.5" rx="1" fill="#0b5561"/><rect x="287.75" y="263.75" width="8.25" height="9.5" rx="1" fill="#07383f"/><rect x="297.75" y="263.75" width="8.25" height="9.5" rx="1" fill="#07383f"/><rect x="307.75" y="263.75" width="8.25" height="9.5" rx="1" fill="#07383f"/><rect x="320.47" y="263.75" width="8.25" height="9.5" rx="1" fill="#0b5561"/><rect x="330.47" y="263.75" width="8.25" height="9.5" rx="1" fill="#07383f"/><rect x="340.47" y="263.75" width="8.25" height="9.5" rx="1" fill="#07383f"/><rect x="350.47" y="263.75" width="8.25" height="9.5" rx="1" fill="#07383f"/><rect x="363.19" y="263.75" width="8.25" height="9.5" rx="1" fill="#3a3a3a"/><rect x="373.19" y="263.75" width="8.25" height="9.5" rx="1" fill="#252525"/><rect x="383.19" y="263.75" width="8.25" height="9.5" rx="1" fill="#252525"/><rect x="393.19" y="263.75" width="8.25" height="9.5" rx="1" fill="#252525"/><rect x="405.91" y="263.75" width="8.25" height="9.5" rx="1" fill="#3a3a3a"/><rect x="415.91" y="263.75" width="8.25" height="9.5" rx="1" fill="#252525"/><rect x="425.91" y="263.75" width="8.25" height="9.5" rx="1" fill="#252525"/><rect x="435.91" y="263.75" width="8.25" height="9.5" rx="1" fill="#252525"/><rect x="448.63" y="263.75" width="8.25" height="9.5" rx="1" fill="#3a3a3a"/><rect x="458.63" y="263.75" width="8.25" height="9.5" rx="1" fill="#252525"/><rect x="468.63" y="263.75" width="8.25" height="9.5" rx="1" fill="#252525"/><rect x="478.63" y="263.75" width="8.25" height="9.5" rx="1" fill="#252525"/><rect x="491.35" y="263.75" width="8.25" height="9.5" rx="1" fill="#3a3a3a"/><rect x="501.35" y="263.75" width="8.25" height="9.5" rx="1" fill="#252525"/><rect x="511.35" y="263.75" width="8.25" height="9.5" rx="1" fill="#252525"/><rect x="521.35" y="263.75" width="8.25" height="9.5" rx="1" fill="#252525"/><rect x="534.07" y="263.75" width="8.25" height="9.5" rx="1" fill="#3a3a3a"/><rect x="544.07" y="263.75" width="8.25" height="9.5" rx="1" fill="#252525"/><rect x="554.07" y="263.75" width="8.25" height="9.5" rx="1" fill="#252525"/><rect x="564.07" y="263.75" width="8.25" height="9.5" rx="1" fill="#252525"/><rect x="576.79" y="263.75" width="8.25" height="9.5" rx="1" fill="#3a3a3a"/><rect x="586.79" y="263.75" width="8.25" height="9.5" rx="1" fill="#252525"/><rect x="596.79" y="263.75" width="8.25" height="9.5" rx="1" fill="#252525"/><rect x="606.79" y="263.75" width="8.25" height="9.5" rx="1" fill="#252525"/><rect x="277.75" y="276.50" width="8.25" height="9.5" rx="1" fill="#0b5561"/><rect x="287.75" y="276.50" width="8.25" height="9.5" rx="1" fill="#07383f"/><rect x="297.75" y="276.50" width="8.25" height="9.5" rx="1" fill="#07383f"/><rect x="307.75" y="276.50" width="8.25" height="9.5" rx="1" fill="#07383f"/><rect x="320.47" y="276.50" width="8.25" height="9.5" rx="1" fill="#0b5561"/><rect x="330.47" y="276.50" width="8.25" height="9.5" rx="1" fill="#07383f"/><rect x="340.47" y="276.50" width="8.25" height="9.5" rx="1" fill="#ffa800"/><rect x="350.47" y="276.50" width="8.25" height="9.5" rx="1" fill="#07383f"/><rect x="363.19" y="276.50" width="8.25" height="9.5" rx="1" fill="#3a3a3a"/><rect x="373.19" y="276.50" width="8.25" height="9.5" rx="1" fill="#3ff3f7"/><rect x="383.19" y="276.50" width="8.25" height="9.5" rx="1" fill="#252525"/><rect x="393.19" y="276.50" width="8.25" height="9.5" rx="1" fill="#3ff3f7"/><rect x="405.91" y="276.50" width="8.25" height="9.5" rx="1" fill="#3a3a3a"/><rect x="415.91" y="276.50" width="8.25" height="9.5" rx="1" fill="#3ff3f7"/><rect x="425.91" y="276.50" width="8.25" height="9.5" rx="1" fill="#252525"/><rect x="435.91" y="276.50" width="8.25" height="9.5" rx="1" fill="#3ff3f7"/><rect x="448.63" y="276.50" width="8.25" height="9.5" rx="1" fill="#3a3a3a"/><rect x="458.63" y="276.50" width="8.25" height="9.5" rx="1" fill="#3ff3f7"/><rect x="468.63" y="276.50" width="8.25" height="9.5" rx="1" fill="#252525"/><rect x="478.63" y="276.50" width="8.25" height="9.5" rx="1" fill="#3ff3f7"/><rect x="491.35" y="276.50" width="8.25" height="9.5" rx="1" fill="#3a3a3a"/><rect x="501.35" y="276.50" width="8.25" height="9.5" rx="1" fill="#3ff3f7"/><rect x="511.35" y="276.50" width="8.25" height="9.5" rx="1" fill="#252525"/><rect x="521.35" y="276.50" width="8.25" height="9.5" rx="1" fill="#3ff3f7"/><rect x="534.07" y="276.50" width="8.25" height="9.5" rx="1" fill="#3a3a3a"/><rect x="544.07" y="276.50" width="8.25" height="9.5" rx="1" fill="#3ff3f7"/><rect x="554.07" y="276.50" width="8.25" height="9.5" rx="1" fill="#252525"/><rect x="564.07" y="276.50" width="8.25" height="9.5" rx="1" fill="#3ff3f7"/><rect x="576.79" y="276.50" width="8.25" height="9.5" rx="1" fill="#3a3a3a"/><rect x="586.79" y="276.50" width="8.25" height="9.5" rx="1" fill="#3ff3f7"/><rect x="596.79" y="276.50" width="8.25" height="9.5" rx="1" fill="#252525"/><rect x="606.79" y="276.50" width="8.25" height="9.5" rx="1" fill="#3ff3f7"/><rect x="277.75" y="289.25" width="8.25" height="9.5" rx="1" fill="#0b5561"/><rect x="287.75" y="289.25" width="8.25" height="9.5" rx="1" fill="#07383f"/><rect x="297.75" y="289.25" width="8.25" height="9.5" rx="1" fill="#07383f"/><rect x="307.75" y="289.25" width="8.25" height="9.5" rx="1" fill="#07383f"/><rect x="320.47" y="289.25" width="8.25" height="9.5" rx="1" fill="#0b5561"/><rect x="330.47" y="289.25" width="8.25" height="9.5" rx="1" fill="#07383f"/><rect x="340.47" y="289.25" width="8.25" height="9.5" rx="1" fill="#07383f"/><rect x="350.47" y="289.25" width="8.25" height="9.5" rx="1" fill="#ffa800"/><rect x="363.19" y="289.25" width="8.25" height="9.5" rx="1" fill="#3a3a3a"/><rect x="373.19" y="289.25" width="8.25" height="9.5" rx="1" fill="#252525"/><rect x="383.19" y="289.25" width="8.25" height="9.5" rx="1" fill="#252525"/><rect x="393.19" y="289.25" width="8.25" height="9.5" rx="1" fill="#252525"/><rect x="405.91" y="289.25" width="8.25" height="9.5" rx="1" fill="#3a3a3a"/><rect x="415.91" y="289.25" width="8.25" height="9.5" rx="1" fill="#252525"/><rect x="425.91" y="289.25" width="8.25" height="9.5" rx="1" fill="#252525"/><rect x="435.91" y="289.25" width="8.25" height="9.5" rx="1" fill="#252525"/><rect x="448.63" y="289.25" width="8.25" height="9.5" rx="1" fill="#3a3a3a"/><rect x="458.63" y="289.25" width="8.25" height="9.5" rx="1" fill="#252525"/><rect x="468.63" y="289.25" width="8.25" height="9.5" rx="1" fill="#252525"/><rect x="478.63" y="289.25" width="8.25" height="9.5" rx="1" fill="#252525"/><rect x="491.35" y="289.25" width="8.25" height="9.5" rx="1" fill="#3a3a3a"/><rect x="501.35" y="289.25" width="8.25" height="9.5" rx="1" fill="#252525"/><rect x="511.35" y="289.25" width="8.25" height="9.5" rx="1" fill="#252525"/><rect x="521.35" y="289.25" width="8.25" height="9.5" rx="1" fill="#252525"/><rect x="534.07" y="289.25" width="8.25" height="9.5" rx="1" fill="#3a3a3a"/><rect x="544.07" y="289.25" width="8.25" height="9.5" rx="1" fill="#252525"/><rect x="554.07" y="289.25" width="8.25" height="9.5" rx="1" fill="#252525"/><rect x="564.07" y="289.25" width="8.25" height="9.5" rx="1" fill="#252525"/><rect x="576.79" y="289.25" width="8.25" height="9.5" rx="1" fill="#3a3a3a"/><rect x="586.79" y="289.25" width="8.25" height="9.5" rx="1" fill="#252525"/><rect x="596.79" y="289.25" width="8.25" height="9.5" rx="1" fill="#252525"/><rect x="606.79" y="289.25" width="8.25" height="9.5" rx="1" fill="#252525"/></svg>
<svg class="a" style="left:640px;top:179px" width="50" height="74" viewBox="640 179 50 74"><circle cx="664.4" cy="183.7" r="3.5" fill="#3ddfe6"/><path d="M661.6 192 V189.2 a1.4 1.4 0 0 1 1.4 -1.4 h2.8 a1.4 1.4 0 0 1 1.4 1.4 V192Z" fill="#e4e7e9"/><ellipse cx="645.3" cy="216.7" rx="2.9" ry="2.6" fill="#3ddfe6"/><ellipse cx="683.7" cy="216.7" rx="2.9" ry="2.6" fill="#3ddfe6"/><path d="M645.3 207 C645.3 197.6 653.6 191.2 664.5 191.2 C675.4 191.2 683.7 197.6 683.7 207 V239.3 a3.5 3.5 0 0 1 -3.5 3.5 H648.8 a3.5 3.5 0 0 1 -3.5 -3.5 Z" fill="#fff"/><rect x="645.3" y="205.9" width="38.4" height="0.6" fill="#c9cdd1"/><rect x="649.3" y="209.5" width="30.5" height="14.5" rx="7.2" fill="#0b2a33"/><circle cx="656.6" cy="216.7" r="1.8" fill="#3ddfe6"/><circle cx="672.1" cy="216.7" r="1.8" fill="#3ddfe6"/><path d="M662.6 217.6 Q664.4 219.6 666.2 217.6" fill="none" stroke="#3ddfe6" stroke-width="0.8" stroke-linecap="round"/><path d="M651.8 242.8 H677 C675 246.6 670.5 247.6 664.4 247.6 C658.3 247.6 653.8 246.6 651.8 242.8Z" fill="#e4e7e9"/><path d="M655.8 246 C659 247.4 669.8 247.4 673 246 C671 249.8 668.2 251.2 664.4 251.2 C660.6 251.2 657.8 249.8 655.8 246Z" fill="#3ddfe6"/></svg>
<span class="t" id="t41" style="left:669.20px;top:229.71px;font-size:4.90px;color:#5a5f65;font-weight:700;letter-spacing:0.030px;">A.I.</span>
<div class="a" style="left:629.10px;top:266.30px;width:6.10px;height:0.90px;background:#d5d8db;"></div>
<div class="a" style="left:639.80px;top:264.80px;width:49.20px;height:2.00px;background:#d0d3d6;border-radius:1px"></div>
<div class="a" style="left:639.80px;top:264.80px;width:12.00px;height:2.00px;background:#3ddfe6;border-radius:1px"></div>
<div class="a" style="left:649.00px;top:262.80px;width:6.00px;height:6.00px;background:#fff;border-radius:50%"></div>
<div class="a" style="left:693.70px;top:266.20px;width:6.00px;height:0.90px;background:#d5d8db;"></div>
<div class="a" style="left:696.25px;top:263.60px;width:0.90px;height:6.00px;background:#d5d8db;"></div>
<svg class="a" style="left:0;top:0" width="960" height="552" viewBox="0 0 960 552"><rect x="638.5" y="280.7" width="51.5" height="19.3" rx="2" fill="#3cf5f8"/></svg>
<span class="t" id="t42" style="left:648.00px;top:286.82px;font-size:8.00px;color:#20262c;letter-spacing:-0.080px;-webkit-text-stroke:0.32px currentColor;">Generate</span>
<div class="a" style="left:0.00px;top:438.00px;width:960.00px;height:2.00px;background:#1c2127;background:linear-gradient(#262c33,#1a1f24)"></div>
<div class="a" style="left:0.00px;top:440.20px;width:122.40px;height:16.10px;background:#4d5661;"></div>
<div class="a" style="left:124.00px;top:440.20px;width:836.00px;height:16.10px;background:#4d5661;"></div>
<div class="a" style="left:0.00px;top:456.30px;width:122.40px;height:95.70px;background:#3a4450;"></div>
<div class="a" style="left:122.40px;top:438.80px;width:1.60px;height:113.20px;background:#1c2127;"></div>
<span class="t" id="t43" style="left:47.45px;top:444.75px;font-size:7.70px;color:#fff;letter-spacing:-0.163px;">Controls</span>
<span class="t" id="t44" style="left:528.20px;top:444.75px;font-size:7.70px;color:#fff;letter-spacing:-0.309px;">Timeline</span>
<div class="a" style="left:5.75px;top:461.70px;width:111.20px;height:21.50px;background:#ffa400;border-radius:4px"></div>
<svg class="a" style="left:48.8px;top:468.6px" width="6" height="8" viewBox="0 0 6 8"><path d="M0.4 0.5 L5.6 4 L0.4 7.5Z" fill="#fff"/></svg>
<span class="t" id="t45" style="left:60.20px;top:469.30px;font-size:7.60px;color:#fff;letter-spacing:-0.069px;">Run</span>
<div class="a" style="left:5.60px;top:530.30px;width:55.80px;height:14.80px;background:transparent;border:1px solid #aeb3b9;border-radius:2px"></div>
<svg class="a" style="left:10.6px;top:533.7px" width="8" height="8" viewBox="0 0 8 8"><circle cx="4" cy="4" r="3.7" fill="#fff"/><path d="M4 0.3 V7.7 M0.3 4 H7.7" stroke="#353e49" stroke-width="0.6"/><ellipse cx="4" cy="4" rx="1.7" ry="3.7" fill="none" stroke="#353e49" stroke-width="0.6"/></svg>
<span class="t" id="t46" style="left:21.80px;top:535.31px;font-size:6.90px;color:#fff;font-weight:700;letter-spacing:-0.432px;">English</span>
<svg class="a" style="left:48.6px;top:535.6px" width="7.4" height="5" viewBox="0 0 7.4 5" fill="none" stroke="#fff" stroke-width="1.15"><path d="M0.7 0.8 L3.7 3.8 L6.7 0.8"/></svg>
<div class="a" style="left:66.50px;top:530.30px;width:15.00px;height:14.80px;background:transparent;border:1px solid #aeb3b9;border-radius:2px"></div>
<svg class="a" style="left:69.6px;top:533.3px" width="8.8" height="8.8" viewBox="0 0 9 9" fill="none" stroke="#e3e5e8" stroke-width="0.9"><circle cx="4.5" cy="4.5" r="3.7"/><path d="M5.8 3.5 A1.7 1.7 0 1 0 5.8 5.5"/></svg>
<span class="t" id="t47" style="left:86.80px;top:534.61px;font-size:7.60px;color:#fff;letter-spacing:0.031px;">2024</span>
<div class="a" style="left:124.00px;top:456.30px;width:836.00px;height:13.30px;background:#3a4450;"></div>
<div class="a" style="left:124.00px;top:469.60px;width:836.00px;height:1.40px;background:#20262c;"></div>
<div class="a" style="left:124.00px;top:471.00px;width:836.00px;height:71.30px;background:#292f36;"></div>
<span class="t" id="t48" style="left:132.65px;top:460.01px;font-size:7.50px;color:#fff;">1</span>
<span class="t" id="t49" style="left:165.95px;top:460.01px;font-size:7.50px;color:#fff;">2</span>
<span class="t" id="t50" style="left:199.25px;top:460.01px;font-size:7.50px;color:#fff;">3</span>
<span class="t" id="t51" style="left:232.55px;top:460.01px;font-size:7.50px;color:#fff;">4</span>
<span class="t" id="t52" style="left:265.85px;top:460.01px;font-size:7.50px;color:#fff;">5</span>
<span class="t" id="t53" style="left:299.15px;top:460.01px;font-size:7.50px;color:#fff;">6</span>
<span class="t" id="t54" style="left:332.45px;top:460.01px;font-size:7.50px;color:#fff;">7</span>
<span class="t" id="t55" style="left:365.75px;top:460.01px;font-size:7.50px;color:#fff;">8</span>
<span class="t" id="t56" style="left:399.05px;top:460.01px;font-size:7.50px;color:#fff;">9</span>
<span class="t" id="t57" style="left:432.35px;top:460.01px;font-size:7.50px;color:#fff;letter-spacing:-0.2px;">10</span>
<span class="t" id="t58" style="left:465.65px;top:460.01px;font-size:7.50px;color:#fff;letter-spacing:-0.2px;">11</span>
<span class="t" id="t59" style="left:498.95px;top:460.01px;font-size:7.50px;color:#fff;letter-spacing:-0.2px;">12</span>
<span class="t" id="t60" style="left:532.25px;top:460.01px;font-size:7.50px;color:#fff;letter-spacing:-0.2px;">13</span>
<span class="t" id="t61" style="left:565.55px;top:460.01px;font-size:7.50px;color:#fff;letter-spacing:-0.2px;">14</span>
<span class="t" id="t62" style="left:598.85px;top:460.01px;font-size:7.50px;color:#fff;letter-spacing:-0.2px;">15</span>
<span class="t" id="t63" style="left:632.15px;top:460.01px;font-size:7.50px;color:#fff;letter-spacing:-0.2px;">16</span>
<span class="t" id="t64" style="left:665.45px;top:460.01px;font-size:7.50px;color:#fff;letter-spacing:-0.2px;">17</span>
<span class="t" id="t65" style="left:698.75px;top:460.01px;font-size:7.50px;color:#fff;letter-spacing:-0.2px;">18</span>
<span class="t" id="t66" style="left:732.05px;top:460.01px;font-size:7.50px;color:#fff;letter-spacing:-0.2px;">19</span>
<span class="t" id="t67" style="left:765.35px;top:460.01px;font-size:7.50px;color:#fff;letter-spacing:-0.2px;">20</span>
<span class="t" id="t68" style="left:798.65px;top:460.01px;font-size:7.50px;color:#fff;letter-spacing:-0.2px;">21</span>
<span class="t" id="t69" style="left:831.95px;top:460.01px;font-size:7.50px;color:#fff;letter-spacing:-0.2px;">22</span>
<span class="t" id="t70" style="left:865.25px;top:460.01px;font-size:7.50px;color:#fff;letter-spacing:-0.2px;">23</span>
<span class="t" id="t71" style="left:898.55px;top:460.01px;font-size:7.50px;color:#fff;letter-spacing:-0.2px;">24</span>
<span class="t" id="t72" style="left:931.85px;top:460.01px;font-size:7.50px;color:#fff;letter-spacing:-0.2px;">25</span>
<svg class="a" style="left:0;top:0" width="960" height="552" viewBox="0 0 960 552" fill="#7d838a"><rect x="162.20" y="474" width="1.05" height="64.8"/><rect x="195.50" y="474" width="1.05" height="64.8"/><rect x="228.80" y="474" width="1.05" height="64.8"/><rect x="262.10" y="474" width="1.05" height="64.8"/><rect x="295.40" y="474" width="1.05" height="64.8"/><rect x="328.70" y="474" width="1.05" height="64.8"/><rect x="362.00" y="474" width="1.05" height="64.8"/><rect x="395.30" y="474" width="1.05" height="64.8"/><rect x="428.60" y="474" width="1.05" height="64.8"/><rect x="461.90" y="474" width="1.05" height="64.8"/><rect x="495.20" y="474" width="1.05" height="64.8"/><rect x="528.50" y="474" width="1.05" height="64.8"/><rect x="561.80" y="474" width="1.05" height="64.8"/><rect x="595.10" y="474" width="1.05" height="64.8"/><rect x="628.40" y="474" width="1.05" height="64.8"/><rect x="661.70" y="474" width="1.05" height="64.8"/><rect x="695.00" y="474" width="1.05" height="64.8"/><rect x="728.30" y="474" width="1.05" height="64.8"/><rect x="761.60" y="474" width="1.05" height="64.8"/><rect x="794.90" y="474" width="1.05" height="64.8"/><rect x="828.20" y="474" width="1.05" height="64.8"/><rect x="861.50" y="474" width="1.05" height="64.8"/><rect x="894.80" y="474" width="1.05" height="64.8"/><rect x="928.10" y="474" width="1.05" height="64.8"/></svg>
<svg class="a" style="left:0;top:0" width="960" height="552" viewBox="0 0 960 552"><rect x="130.3" y="474.60" width="65.3" height="9.80" rx="4.6" fill="#a55d06" stroke="#f28c00" stroke-width="1.25"/><rect x="130.3" y="487.20" width="65.3" height="10.20" rx="4.6" fill="#1b7a31" stroke="#1fcb2b" stroke-width="1.25"/><rect x="130.3" y="500.30" width="65.3" height="9.90" rx="4.6" fill="#060606" stroke="#ffc83a" stroke-width="1.50"/><rect x="162.2" y="488" width="0.9" height="8.6" fill="rgba(150,210,160,0.16)"/><rect x="129.15" y="456" width="1.55" height="86.3" fill="#e2e4e6"/></svg>
<div class="a" style="left:124.00px;top:542.30px;width:836.00px;height:7.70px;background:#2b2b2b;"></div>
<div class="a" style="left:124.20px;top:544.20px;width:387.80px;height:4.80px;background:#8e8e8e;border-radius:2.4px"></div>
<div class="a" style="left:0.00px;top:550.00px;width:960.00px;height:2.00px;background:#1c2127;"></div>
</body></html>
